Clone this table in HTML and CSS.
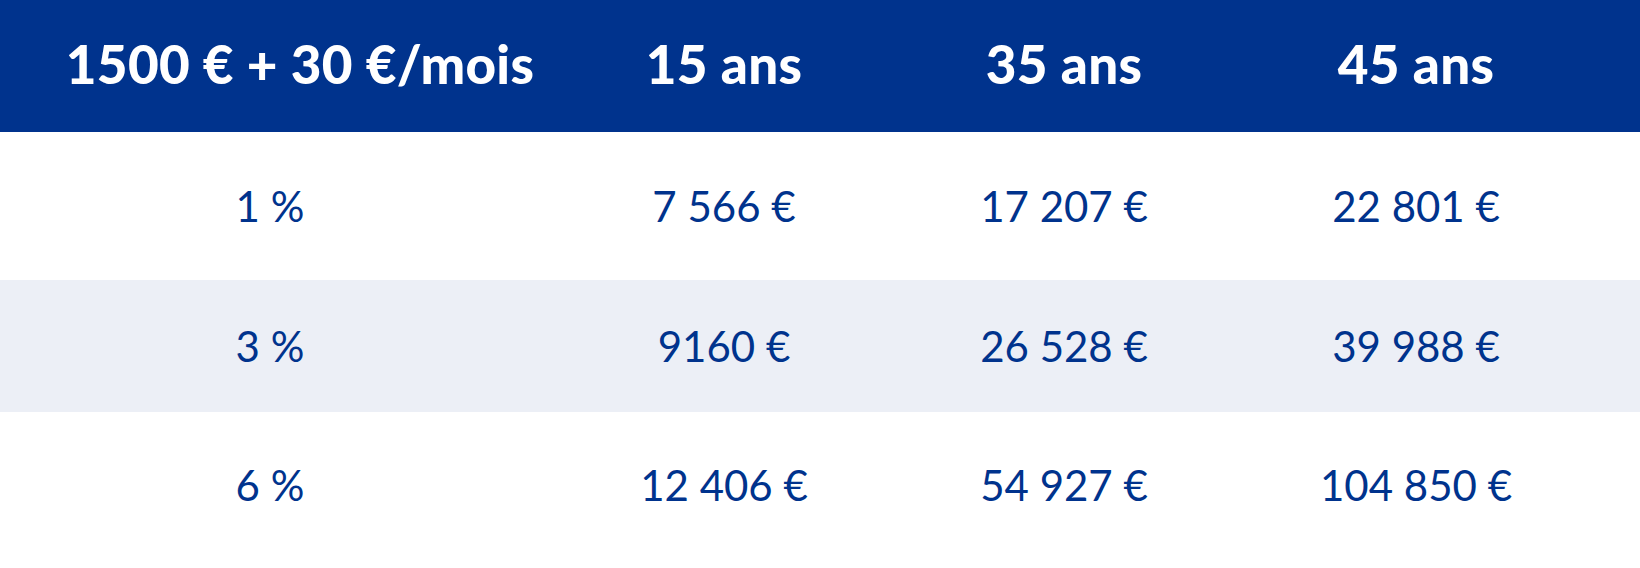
FILE: index.html
```html
<!DOCTYPE html>
<html lang="fr">
<head>
<meta charset="utf-8">
<title>Simulation</title>
<link rel="stylesheet" href="styles.css">
</head>
<body>
<div class="table">
  <div class="row head">
    <div class="cell first">1500 € + 30 €/mois</div>
    <div class="cell">15 ans</div>
    <div class="cell">35 ans</div>
    <div class="cell">45 ans</div>
  </div>
  <div class="row r1">
    <div class="cell">1 %</div>
    <div class="cell">7 566 €</div>
    <div class="cell">17 207 €</div>
    <div class="cell">22 801 €</div>
  </div>
  <div class="row r2 alt">
    <div class="cell">3 %</div>
    <div class="cell">9160 €</div>
    <div class="cell">26 528 €</div>
    <div class="cell">39 988 €</div>
  </div>
  <div class="row r3">
    <div class="cell">6 %</div>
    <div class="cell">12 406 €</div>
    <div class="cell">54 927 €</div>
    <div class="cell">104 850 €</div>
  </div>
</div>
</body>
</html>
```

FILE: styles.css
```css
html, body {
  margin: 0;
  padding: 0;
  background: #ffffff;
}
body {
  font-family: Lato, "Open Sans", sans-serif;
  color: #00338d;
}
.table {
  width: 1640px;
  height: 568px;
  display: flex;
  flex-direction: column;
}
.row {
  display: grid;
  grid-template-columns: 540px 368px 312px 392px;
  align-items: center;
}
.cell {
  text-align: center;
  white-space: nowrap;
}
.head {
  height: 132px;
  background: #00338d;
  color: #ffffff;
  font-weight: 900;
  font-size: 53px;
  letter-spacing: 0.3px;
  padding-bottom: 6px;
  box-sizing: border-box;
}
.head .first {
  padding-left: 60px;
}
.r1, .r2, .r3 {
  font-size: 42px;
  font-weight: 400;
}
.r1 { height: 148px; }
.r2 { height: 132px; }
.r3 { flex: 1; padding-bottom: 10px; box-sizing: border-box; }
.alt { background: #eceff6; }
```
